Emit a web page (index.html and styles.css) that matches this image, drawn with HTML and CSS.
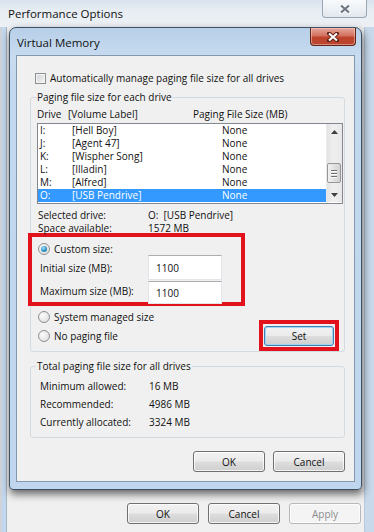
FILE: index.html
```html
<!DOCTYPE html>
<html lang="en">
<head>
  <meta charset="UTF-8" />
  <title>Virtual Memory</title>
  <meta name="viewport" content="width=device-width, initial-scale=1.0" />
  <link rel="stylesheet" href="styles.css">
</head>
<body>
  <div class="window">
    <div class="window__title">
      <span class="window__caption">Performance Options</span>
      <div class="close close--plain">
        <svg width="12" height="10" viewBox="0 0 12 10">
          <path d="M2 1.5 L10 8.5 M10 1.5 L2 8.5" stroke="#f7f9fb" stroke-width="4" stroke-linecap="round" />
          <path d="M2 1.5 L10 8.5 M10 1.5 L2 8.5" stroke="#6d7782" stroke-width="2.2" />
        </svg>
      </div>
    </div>

    <div class="dialog">
      <div class="dialog__title">
        <span class="dialog__caption">Virtual Memory</span>
        <div class="close close--red">
          <svg width="12" height="10" viewBox="0 0 12 10">
            <path d="M2 1.5 L10 8.5 M10 1.5 L2 8.5" stroke="#5a1c12" stroke-width="4" stroke-linecap="round" />
            <path d="M2 1.5 L10 8.5 M10 1.5 L2 8.5" stroke="#fff" stroke-width="2.2" />
          </svg>
        </div>
      </div>

      <div class="dialog__body">
        <div class="check-line"><span class="check__box"></span>Automatically manage paging file size for all drives</div>

        <fieldset class="group">
          <legend>Paging file size for each drive</legend>
          <div class="list__head">
            <span>Drive</span><span>[Volume Label]</span><span>Paging File Size (MB)</span>
          </div>
          <div class="list">
            <div class="list__rows">
              <div class="row"><span>I:</span><span>[Hell Boy]</span><span>None</span></div>
              <div class="row"><span>J:</span><span>[Agent 47]</span><span>None</span></div>
              <div class="row"><span>K:</span><span>[Wispher Song]</span><span>None</span></div>
              <div class="row"><span>L:</span><span>[Illadin]</span><span>None</span></div>
              <div class="row"><span>M:</span><span>[Alfred]</span><span>None</span></div>
              <div class="row row--selected"><span>O:</span><span>[USB Pendrive]</span><span>None</span></div>
            </div>
            <div class="scroll">
              <div class="scroll__btn">
                <svg width="7" height="4" viewBox="0 0 7 4"><path d="M0 4 L3.5 0 L7 4 Z" fill="#404040" /></svg>
              </div>
              <div class="scroll__thumb"><i></i><i></i><i></i></div>
              <div class="scroll__btn scroll__btn--down">
                <svg width="7" height="4" viewBox="0 0 7 4"><path d="M0 0 L7 0 L3.5 4 Z" fill="#404040" /></svg>
              </div>
            </div>
          </div>

          <div class="info">
            <span>Selected drive:</span><span>O:&nbsp; [USB Pendrive]</span>
            <span>Space available:</span><span>1572 MB</span>
          </div>

          <div class="mark mark--size">
            <div class="radio-line"><span class="radio radio--on"><i></i></span>Custom size:</div>
            <div class="size-row">
              <span>Initial size (MB):</span>
              <input class="textbox" type="text" value="1100" />
            </div>
            <div class="size-row size-row--last">
              <span>Maximum size (MB):</span>
              <input class="textbox" type="text" value="1100" />
            </div>
          </div>

          <div class="options">
            <div class="options__radios">
              <div class="radio-line"><span class="radio"></span>System managed size</div>
              <div class="radio-line"><span class="radio"></span>No paging file</div>
            </div>
            <div class="mark mark--set"><button class="btn btn--default">Set</button></div>
          </div>
        </fieldset>

        <fieldset class="group group--total">
          <legend>Total paging file size for all drives</legend>
          <div class="totals">
            <span>Minimum allowed:</span><span>16 MB</span>
            <span>Recommended:</span><span>4986 MB</span>
            <span>Currently allocated:</span><span>3324 MB</span>
          </div>
        </fieldset>

        <div class="actions">
          <button class="btn">OK</button>
          <button class="btn">Cancel</button>
        </div>
      </div>
    </div>

    <div class="actions actions--outer">
      <button class="btn">OK</button>
      <button class="btn">Cancel</button>
      <button class="btn btn--disabled">Apply</button>
    </div>
  </div>
</body>
</html>
```

FILE: styles.css
```css
* {
  box-sizing: border-box;
}
body {
  margin: 0;
  font-family: 'Open Sans', 'Noto Sans', sans-serif;
  font-size: 10px;
  color: #111;
  background: #dfe6ee;
}
.window {
  width: 374px;
  height: 532px;
  overflow: hidden;
  background: linear-gradient(90deg, #cfd3d8 0 2px, #c3d8ee 2px 6px, #a7b6c5 6px 7px, #f0f0f0 7px 364px, #b7c9db 364px 365px, #c7d9eb 365px);
}
.window__title {
  height: 27px;
  display: flex;
  align-items: flex-start;
  justify-content: space-between;
  padding-left: 8px;
  padding-right: 7px;
  background: linear-gradient(180deg, #d9e3ed 0, #e7edf3 40%, #edf1f5 100%);
}
.window__caption {
  font-size: 11.5px;
  line-height: 28px;
  color: #111;
}
.close {
  width: 45px;
  height: 18px;
  display: flex;
  align-items: center;
  justify-content: center;
  border-radius: 0 0 4px 4px;
}
.close--plain {
  border: 1px solid #9aa6b2;
  border-top: none;
  background: linear-gradient(180deg, #f8fafc 0, #eef2f6 50%, #e1e7ee 100%);
}
.close--red {
  width: 46px;
  margin-right: 5px;
  border: 1px solid #5e2418;
  border-top: none;
  background: linear-gradient(180deg, #e6a89c 0, #d2715f 45%, #c0432c 55%, #b8452f 100%);
  box-shadow: inset 0 0 0 1px rgba(255, 210, 200, 0.5);
}

/* Virtual Memory window */
.dialog {
  margin-left: 9px;
  width: 353px;
  height: 463px;
  border: 1px solid #3e5063;
  border-radius: 7px 7px 4px 4px;
  padding: 0 6px 7px;
  background: linear-gradient(180deg, #b7cfe8 0, #c9dcf0 30px, #c2d8ee 60px, #bfd6ee 100%);
  box-shadow: 1px 4px 9px rgba(0, 0, 0, 0.6);
}
.dialog__title {
  height: 27px;
  display: flex;
  justify-content: space-between;
  align-items: flex-start;
  margin: 0 -6px;
  padding-left: 7px;
}
.dialog__caption {
  font-size: 11.5px;
  line-height: 29px;
  color: #111;
}
.dialog__body {
  height: 427px;
  border: 1px solid #8398ad;
  background: #f0f0f0;
  padding: 15px 9px 0 13px;
}

.check-line {
  display: flex;
  align-items: center;
  height: 14px;
  padding-left: 5px;
}
.check__box {
  width: 11px;
  height: 11px;
  margin-right: 4px;
  border: 1px solid #8e8f8f;
  background: linear-gradient(135deg, #cfd3d8, #f4f4f4);
  box-shadow: inset 0 0 0 1px #f4f4f4;
}

.group {
  margin: 5px 0 0;
  width: 315px;
  min-width: 0;
  padding: 0 1px 0 6px;
  border: 1px solid #d3dbe1;
  border-radius: 3px;
}
.group legend {
  padding: 0 1px;
  margin-left: -1px;
  line-height: 14px;
}
.group--total {
  margin-top: 7px;
  padding-bottom: 6px;
}

.list__head {
  margin-top: 3px;
  line-height: 14px;
  display: grid;
  grid-template-columns: 31px 125px 1fr;
}
.list {
  margin-top: 2px;
  height: 81px;
  display: flex;
  border: 1px solid #838790;
  padding-bottom: 1px;
  background: #fff;
}
.list__rows {
  flex: 1;
}
.row {
  height: 13px;
  line-height: 13px;
  display: grid;
  grid-template-columns: 32px 150px 1fr;
  padding-left: 2px;
}
.row--selected {
  background: #3399ff;
  color: #fff;
}
.scroll {
  width: 16px;
  display: flex;
  flex-direction: column;
  background: linear-gradient(90deg, #e3e3e3, #efefef 40%, #e8e8e8);
  border-left: 1px solid #eaeaea;
}
.scroll__btn {
  height: 16px;
  display: flex;
  align-items: center;
  justify-content: center;
  padding-bottom: 1px;
}
.scroll__btn--down {
  margin-top: auto;
  padding: 2px 0 0;
}
.scroll__thumb {
  margin: 23px 1px 0 0;
  height: 20px;
  border: 1px solid #979797;
  border-radius: 2px;
  background: linear-gradient(90deg, #f1f1f1, #e1e1e1 50%, #d2d2d2);
  display: flex;
  flex-direction: column;
  justify-content: center;
  gap: 2px;
  padding: 0 3px;
}
.scroll__thumb i {
  height: 1px;
  background: #6f6f6f;
  box-shadow: 0 1px 0 #fff;
}

.info {
  margin-top: 5px;
  display: grid;
  grid-template-columns: 110px 1fr;
  line-height: 13px;
  padding-left: 1px;
}

.mark {
  border: 4px solid #e1121c;
}
.mark--size {
  width: 217px;
  height: 73px;
  margin: -2px 0 0 -9px;
  padding: 5px 0 0 6px;
}
.mark--set {
  margin: 14px 4px 0 0;
  width: 80px;
  height: 31px;
  padding: 2px 1px 1px;
}

.radio-line {
  display: flex;
  align-items: center;
  height: 13px;
}
.radio {
  width: 12px;
  height: 12px;
  margin-right: 4px;
  border-radius: 50%;
  border: 1px solid #8f9092;
  background: radial-gradient(circle at 35% 35%, #fbfbfb, #dadada);
  display: grid;
  place-items: center;
}
.radio--on i {
  width: 6px;
  height: 6px;
  border-radius: 50%;
  background: radial-gradient(circle at 40% 35%, #a6e4ff, #2a8fc2 55%, #115a86);
}

.size-row {
  display: grid;
  grid-template-columns: 108px 74px;
  align-items: center;
  height: 25px;
  padding-left: 2px;
}
.size-row--last {
  margin-top: 1px;
  height: 21px;
  align-items: start;
}
.size-row--last span {
  line-height: 21px;
}
.textbox {
  width: 74px;
  height: 25px;
  margin: 0;
  padding: 0 0 0 7px;
  font: inherit;
  color: #111;
  border: 1px solid #e2e5ea;
  border-top-color: #abadb3;
  background: #fff;
}
.size-row--last .textbox {
  height: 23px;
}

.options {
  display: flex;
  justify-content: space-between;
  align-items: flex-start;
}
.options__radios {
  padding: 1px 0 0 1px;
}
.options__radios .radio-line {
  height: 19px;
}

.totals {
  margin-top: 4px;
  display: grid;
  grid-template-columns: 109px 1fr;
  grid-auto-rows: 18px;
  align-items: center;
  padding-left: 3px;
}

.actions {
  margin-top: 13px;
  display: flex;
  justify-content: flex-end;
  gap: 8px;
}
.actions--outer {
  gap: 9px;
  padding-right: 13px;
}
.btn {
  width: 72px;
  height: 21px;
  padding: 0;
  font: inherit;
  color: #111;
  border: 1px solid #707070;
  border-radius: 3px;
  background: linear-gradient(180deg, #f2f2f2 0, #ebebeb 48%, #dddddd 52%, #cfcfcf 100%);
  box-shadow: inset 0 0 0 1px rgba(255, 255, 255, 0.75);
}
.btn--default {
  width: 70px;
  height: 20px;
  border-color: #3c7fb1;
  box-shadow: inset 0 0 0 1px #9fd6f5;
}
.btn--disabled {
  color: #8c8c8c;
  border-color: #b5b9bd;
  background: #f4f4f4;
}
```
